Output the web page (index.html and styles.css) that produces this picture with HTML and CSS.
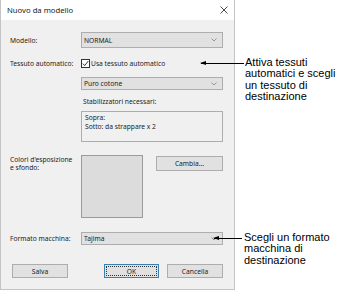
FILE: index.html
```html
<!DOCTYPE html>
<html lang="it">
<head>
<meta charset="utf-8">
<title>Nuovo da modello</title>
<link rel="stylesheet" href="styles.css">
</head>
<body>
<div class="stage">
  <div class="dialog">
    <div class="titlebar">
      <span class="title">Nuovo da modello</span>
      <svg class="close" width="8" height="8" viewBox="0 0 8 8"><path d="M0.5 0.5 L7.5 7.5 M7.5 0.5 L0.5 7.5" stroke="#333" stroke-width="0.9" fill="none"/></svg>
    </div>
    <div class="content">
      <div class="row r-modello">
        <span class="lbl">Modello:</span>
        <div class="combo tall"><span>NORMAL</span><svg class="chev" width="6" height="4" viewBox="0 0 6 4"><path d="M0.5 0.5 L3 3 L5.5 0.5" stroke="#777" stroke-width="0.7" fill="none"/></svg></div>
      </div>
      <div class="row r-auto">
        <span class="lbl">Tessuto automatico:</span>
        <div class="check"><span class="box"><svg width="7" height="7" viewBox="0 0 7 7"><path d="M0.8 3.6 L2.7 5.6 L6.3 1" stroke="#222" stroke-width="0.9" fill="none"/></svg></span><span>Usa tessuto automatico</span></div>
      </div>
      <div class="row r-puro">
        <span></span>
        <div class="combo"><span>Puro cotone</span><svg class="chev" width="6" height="4" viewBox="0 0 6 4"><path d="M0.5 0.5 L3 3 L5.5 0.5" stroke="#777" stroke-width="0.7" fill="none"/></svg></div>
      </div>
      <div class="row r-stab">
        <span></span>
        <span class="note">Stabilizzatori necessari:</span>
      </div>
      <div class="row r-text">
        <span></span>
        <div class="textbox">Sopra:<br>Sotto: da strappare x 2</div>
      </div>
      <div class="row r-colori">
        <span class="lbl two">Colori d'esposizione<br>e sfondo:</span>
        <div class="colors"><div class="swatch"></div><span class="btn cambia">Cambia...</span></div>
      </div>
      <div class="row r-formato">
        <span class="lbl">Formato macchina:</span>
        <div class="combo"><span>Tajima</span><svg class="chev" width="6" height="4" viewBox="0 0 6 4"><path d="M0.5 0.5 L3 3 L5.5 0.5" stroke="#777" stroke-width="0.7" fill="none"/></svg></div>
      </div>
      <div class="buttons">
        <span class="btn">Salva</span>
        <span class="btn ok"><span class="focus">OK</span></span>
        <span class="btn">Cancella</span>
      </div>
    </div>
  </div>

  <div class="callout c1">
    <div class="leader"><span class="head"></span></div>
    <p>Attiva tessuti<br>automatici e scegli<br>un tessuto di<br>destinazione</p>
  </div>
  <div class="callout c2">
    <div class="leader"><span class="head"></span></div>
    <p>Scegli un formato<br>macchina di<br>destinazione</p>
  </div>
</div>
</body>
</html>
```

FILE: styles.css
```css
* { box-sizing: border-box; }
html, body { margin: 0; padding: 0; background: #fff; }
.stage { position: relative; width: 344px; height: 298px; }

.dialog {
  width: 235px;
  height: 290px;
  background: #f0f0f0;
  border: 1px solid #c4c4c4;
  border-top: none;
  font-family: "Noto Sans", "Open Sans", sans-serif;
  font-size: 6.7px;
  color: #222;
  display: flex;
  flex-direction: column;
}

.titlebar {
  height: 20px;
  background: #fff;
  display: flex;
  align-items: center;
  justify-content: space-between;
  padding: 0 4px 0 6px;
}
.title { font-size: 7.7px; color: #222; }
.close { display: block; margin-right: 2px; }

.content {
  padding: 0 11px 0 9px;
  display: flex;
  flex-direction: column;
}

.row {
  display: grid;
  grid-template-columns: 71px 142px;
  align-items: center;
}
.lbl { white-space: nowrap; }

.combo {
  height: 13px;
  background: #e1e1e1;
  border: 1px solid #adadad;
  display: flex;
  align-items: center;
  justify-content: space-between;
  padding: 0 5px 0 2px;
}
.combo.tall { height: 16px; }
.chev { display: block; }

.r-modello { margin-top: 12px; }
.r-auto { margin-top: 10px; height: 10px; }
.r-puro { margin-top: 9px; }
.r-stab { margin-top: 6px; height: 10px; }
.note { padding-left: 2px; }
.r-text { margin-top: 5px; }
.r-colori { margin-top: 13px; align-items: start; }
.r-formato { margin-top: 14px; }

.check { display: flex; align-items: center; gap: 1px; }
.box {
  width: 9px; height: 9px;
  background: #fff;
  border: 1px solid #333;
  display: flex; align-items: center; justify-content: center;
}
.box svg { display: block; }

.textbox {
  height: 31px;
  border: 1px solid #adadad;
  background: #f0f0f0;
  padding: 1px 3px;
  line-height: 9px;
}

.two { line-height: 8px; padding-top: 1px; white-space: nowrap; }

.colors { display: flex; align-items: flex-start; justify-content: space-between; }
.swatch {
  width: 62px; height: 63px;
  background: #dcdcdc;
  border: 1px solid #9a9a9a;
}
.btn {
  height: 15px;
  width: 56px;
  background: #e1e1e1;
  border: 1px solid #adadad;
  display: flex;
  align-items: center;
  justify-content: center;
}
.cambia { width: 67px; margin-top: 1px; }

.buttons {
  margin-top: 19px;
  display: flex;
  gap: 8px;
  padding-left: 2px;
}
.buttons .btn { height: 14px; }
.buttons .ok { margin-left: auto; width: 55px; border-color: #3c7fb1; padding: 1px; }
.focus {
  width: 100%; height: 100%;
  border: 1px dotted #333;
  display: flex; align-items: center; justify-content: center;
}

.callout {
  position: absolute;
  display: flex;
  align-items: flex-start;
  font-family: "Liberation Sans", Arial, sans-serif;
  font-size: 11px;
  color: #000;
}
.callout p { margin: 0; line-height: 11.4px; }
.leader {
  position: relative;
  height: 1px;
  background: #000;
  margin-top: 6px;
}
.head {
  position: absolute;
  left: -1px; top: -2px;
  width: 0; height: 0;
  border-top: 2.5px solid transparent;
  border-bottom: 2.5px solid transparent;
  border-right: 6px solid #000;
}
.c1 { left: 201px; top: 57px; }
.c1 .leader { width: 43px; margin-right: 1px; }
.c2 { left: 214px; top: 232px; }
.c2 .leader { width: 28px; margin-right: 2px; }
```
